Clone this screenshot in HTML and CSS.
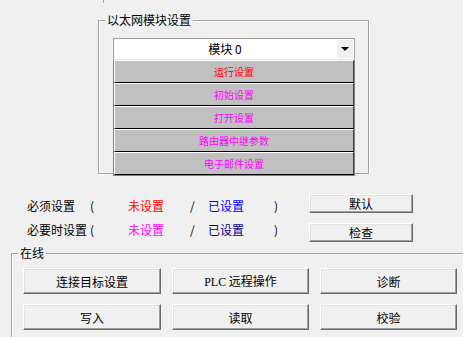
FILE: index.html
```html
<!DOCTYPE html>
<html lang="zh-CN">
<head>
    <meta charset="UTF-8">
    <title>以太网模块设置</title>
    <link rel="stylesheet" href="styles.css">
</head>
<body>
    <div class="top-tick"></div>

    <fieldset class="group eth-group">
        <legend>以太网模块设置</legend>
        <div class="combo">
            <span class="combo-text">模块 0</span>
            <span class="combo-arrow"></span>
        </div>
        <div class="module-list">
            <button class="module-btn red">运行设置</button>
            <button class="module-btn">初始设置</button>
            <button class="module-btn">打开设置</button>
            <button class="module-btn">路由器中继参数</button>
            <button class="module-btn">电子邮件设置</button>
        </div>
    </fieldset>

    <div class="status">
        <div class="status-grid">
            <span>必须设置</span><span>(</span>
            <span class="c-red">未设置</span><span>/</span>
            <span class="c-blue">已设置</span><span>)</span>

            <span>必要时设置</span><span>(</span>
            <span class="c-magenta">未设置</span><span>/</span>
            <span class="c-navy">已设置</span><span>)</span>
        </div>
        <div class="status-buttons">
            <button class="win-btn small">默认</button>
            <button class="win-btn small">检查</button>
        </div>
    </div>

    <fieldset class="group online-group">
        <legend>在线</legend>
        <div class="online-grid">
            <button class="win-btn">连接目标设置</button>
            <button class="win-btn"><span class="latin">PLC</span> 远程操作</button>
            <button class="win-btn">诊断</button>
            <button class="win-btn">写入</button>
            <button class="win-btn">读取</button>
            <button class="win-btn">校验</button>
        </div>
    </fieldset>
</body>
</html>
```

FILE: styles.css
```css
html, body {
    margin: 0;
    padding: 0;
    background: #f0f0f0;
    overflow: hidden;
}
body {
    width: 463px;
    height: 337px;
    font-family: "Noto Sans CJK SC", sans-serif;
    font-size: 12px;
    color: #000;
}
button {
    font-family: inherit;
    font-size: 12px;
    margin: 0;
    padding: 0;
    cursor: default;
}
.top-tick {
    width: 0;
    height: 3px;
    margin-left: 103px;
    border-left: 1px solid #a0a0a0;
}

/* group boxes */
.group {
    margin: 0;
    border: 1px solid #a0a0a0;
    box-shadow: inset 1px 1px #fff, 1px 1px #fff;
    min-width: 0;
}
.group legend {
    padding: 0 2px;
    line-height: 14px;
    height: 14px;
    font-size: 12px;
}
.eth-group {
    box-sizing: border-box;
    width: 271px;
    margin: 10px 0 0 98px;
    padding: 0 14px 0 14px;
}
.eth-group legend {
    margin-left: -8px;
}

/* module combo */
.combo {
    margin-top: 11px;
    width: 242px;
    height: 22px;
    box-sizing: border-box;
    display: flex;
    background: #fff;
    border: 1px solid #a0a0a0;
    border-bottom-color: #e3e3e3;
}
.combo-text {
    flex: 1;
    text-align: center;
    line-height: 20px;
    font-size: 12px;
}
.combo-arrow {
    width: 16px;
    margin: 1px;
    background: #f0f0f0;
    display: flex;
    align-items: center;
    justify-content: center;
}
.combo-arrow::before {
    content: "";
    border-left: 4px solid transparent;
    border-right: 4px solid transparent;
    border-top: 4px solid #000;
}
.module-list {
    width: 242px;
    box-sizing: border-box;
    border-left: 1px solid #808080;
    border-right: 1px solid #808080;
    border-bottom: 1px solid #808080;
    margin-bottom: -3px;
    display: flex;
    flex-direction: column;
}
.module-btn {
    height: 23px;
    background: #c0c0c0;
    border: 1px solid;
    border-color: #fff #404040 #000 #fff;
    color: #ff00ff;
    font-size: 10px;
    line-height: 20px;
}
.module-btn.red {
    color: #ff0000;
}

/* status rows */
.status {
    display: flex;
    margin: 20px 0 0 27px;
    height: 48px;
}
.status-grid {
    display: grid;
    grid-template-columns: 63px 38px 62px 18px 66px 35px;
    grid-auto-rows: 24px;
    align-items: center;
    line-height: 24px;
    white-space: nowrap;
}
.c-red { color: #ff0000; }
.c-blue { color: #0000ff; }
.c-magenta { color: #ff00ff; }
.c-navy { color: #000080; }
.status-buttons {
    display: flex;
    flex-direction: column;
    gap: 10px;
}

/* windows push buttons */
.win-btn {
    background: #f0f0f0;
    border: 1px solid;
    border-color: #fff #696969 #696969 #fff;
    box-shadow: inset -1px -1px #a0a0a0, inset 1px 1px #e3e3e3;
    color: #000;
    height: 26px;
}
.win-btn.small {
    width: 104px;
    height: 19px;
    line-height: 16px;
}
.latin {
    font-family: "Liberation Serif", serif;
    font-size: 12px;
}

/* online group */
.online-group {
    box-sizing: border-box;
    width: 470px;
    margin: 4px 0 0 11px;
    padding: 8px 0 20px 11px;
}
.online-group legend {
    margin-left: -5px;
}
.online-grid {
    display: grid;
    grid-template-columns: 138px 137px 137px;
    grid-template-rows: 26px 25px;
    column-gap: 11px;
    row-gap: 10px;
}
```
